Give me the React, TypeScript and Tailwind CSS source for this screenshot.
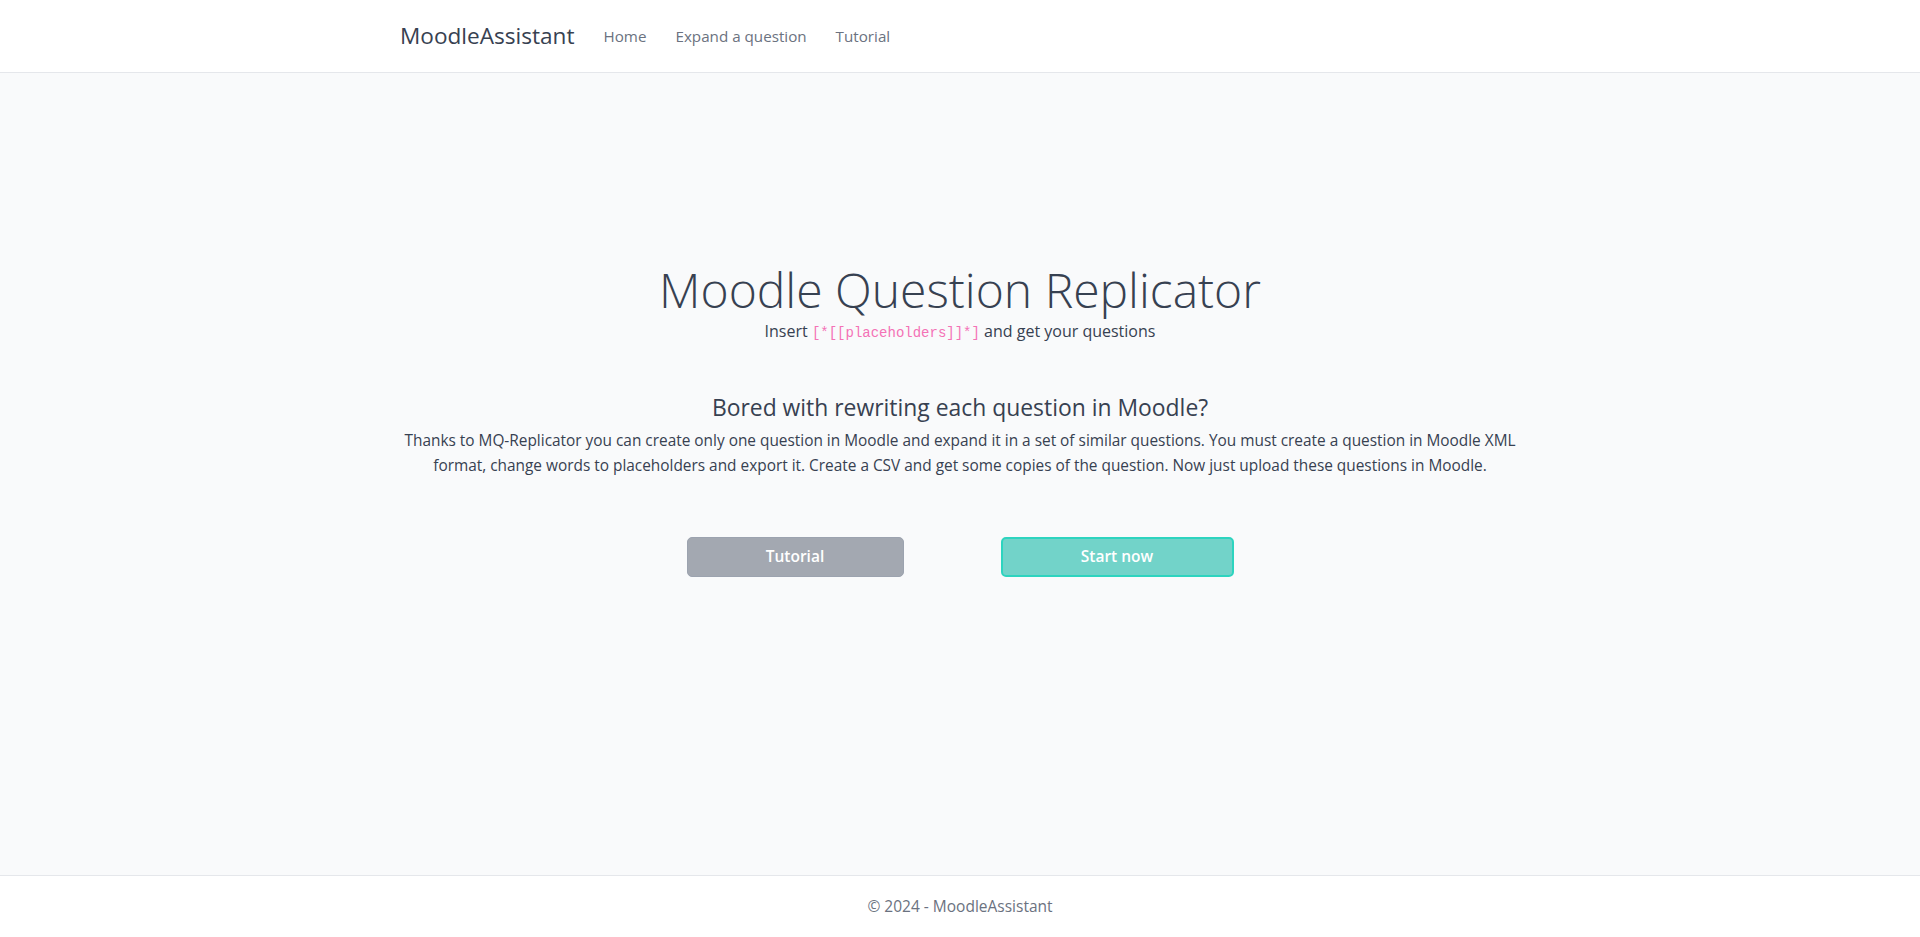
import React from 'react';

const font = { fontFamily: '"Segoe UI", "Open Sans", "Noto Sans", sans-serif' };

export default function App() {
  const links = ['Home', 'Expand a question', 'Tutorial'];

  return (
    <div className="min-h-screen flex flex-col text-[#374151]" style={font}>
      <header className="h-[73px] bg-white border-b border-[#e5e7eb]">
        <div className="w-[1140px] mx-auto px-[10px] h-full flex items-center">
          <a className="text-[22.6px] text-[#374151] mr-[29px]">MoodleAssistant</a>
          <nav className="flex items-center gap-[29px]">
            {links.map((l) => (
              <a key={l} className="text-[15.2px] text-[#6b7280]">{l}</a>
            ))}
          </nav>
        </div>
      </header>

      <main className="flex-1 bg-[#f9fafb]">
        <div className="w-[1116px] mx-auto pt-[188px] text-center">
          <h1 className="text-[48px] font-light leading-[1.2]">Moodle Question Replicator</h1>
          <p className="text-[16px] leading-[24px]">
            Insert{' '}
            <code className="text-[14px] text-[#f472b6]" style={{ fontFamily: '"Liberation Mono", monospace' }}>
              [*[[placeholders]]*]
            </code>{' '}
            and get your questions
          </p>

          <h3 className="mt-[49px] text-[22.9px] leading-[1.2]">Bored with rewriting each question in Moodle?</h3>
          <p className="mt-[7px] text-[15.4px] leading-[25px]">
            Thanks to MQ-Replicator you can create only one question in Moodle and expand it in a set of similar questions. You must create a question in Moodle XML format, change words to placeholders and export it. Create a CSV and get some copies of the question. Now just upload these questions in Moodle.
          </p>

          <div className="mt-[59px] flex justify-center gap-[97px]">
            <button className="w-[217px] h-[40px] rounded-[5px] bg-[#a3a8b1] border border-[#9ca3af] text-white font-semibold text-[15.5px]">
              Tutorial
            </button>
            <button className="w-[233px] h-[40px] rounded-[5px] bg-[#72d3c9] border-2 border-[#2dd4bf] text-white font-semibold text-[15.5px]">
              Start now
            </button>
          </div>
        </div>
      </main>

      <footer className="h-[62px] bg-white border-t border-[#e5e7eb] flex items-center justify-center text-[15.5px] text-[#6b7280]">
        © 2024 - MoodleAssistant
      </footer>
    </div>
  );
}
